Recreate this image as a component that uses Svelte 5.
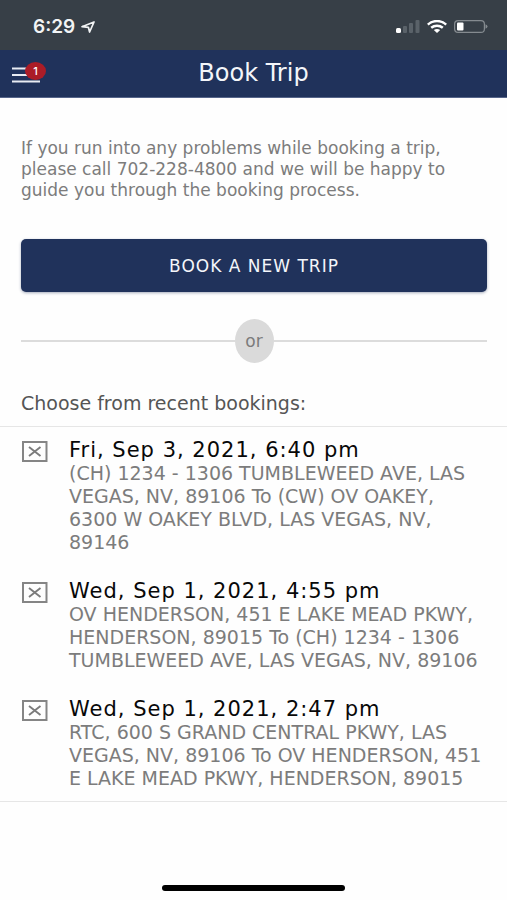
<script>
  const trips = [
    {
      when: 'Fri, Sep 3, 2021, 6:40 pm',
      route: '(CH) 1234 - 1306 TUMBLEWEED AVE, LAS VEGAS, NV, 89106 To (CW) OV OAKEY, 6300 W OAKEY BLVD, LAS VEGAS, NV, 89146'
    },
    {
      when: 'Wed, Sep 1, 2021, 4:55 pm',
      route: 'OV HENDERSON, 451 E LAKE MEAD PKWY, HENDERSON, 89015 To (CH) 1234 - 1306 TUMBLEWEED AVE, LAS VEGAS, NV, 89106'
    },
    {
      when: 'Wed, Sep 1, 2021, 2:47 pm',
      route: 'RTC, 600 S GRAND CENTRAL PKWY, LAS VEGAS, NV, 89106 To OV HENDERSON, 451 E LAKE MEAD PKWY, HENDERSON, 89015'
    }
  ];
</script>

<div class="screen">
  <div class="status">
    <div class="clock">
      <span>6:29</span>
      <svg width="14" height="12" viewBox="0 0 14 12" aria-hidden="true">
        <path d="M1 5.7 13 1 8.6 11 7.4 6.3Z" fill="none" stroke="#f2f4f5" stroke-width="1.7" stroke-linejoin="round" />
      </svg>
    </div>
    <div class="signals">
      <svg width="24" height="13" viewBox="0 0 24 13" aria-hidden="true">
        <rect x="0" y="8" width="5" height="5" rx="1.5" fill="#fff" />
        <rect x="7" y="6" width="4" height="7" rx="1" fill="#5a6269" />
        <rect x="13" y="3" width="4" height="10" rx="1" fill="#5a6269" />
        <rect x="19.5" y="0" width="4" height="13" rx="1" fill="#5a6269" />
      </svg>
      <svg width="20" height="13" viewBox="0 0 20 13" aria-hidden="true">
        <g fill="none" stroke="#fff" stroke-width="2.5">
          <path d="M.8 4.6C6-.1 14-.1 19.2 4.600" />
          <path d="M4.2 7.8c3.4-2.9 8.2-2.9 11.6 0" />
        </g>
        <path d="M6.8 10.1c2-1.5 4.4-1.5 6.4 0L10 13Z" fill="#fff" />
      </svg>
      <svg width="34" height="13" viewBox="0 0 34 13" aria-hidden="true">
        <rect x=".6" y=".6" width="29.8" height="11.8" rx="3.5" fill="none" stroke="#858b90" stroke-width="1.2" />
        <rect x="3" y="2.5" width="6.5" height="8" rx="1" fill="#fff" />
        <path d="M31.5 4.200q2 .7 2 2.300t-2 2.300Z" fill="#858b90" />
      </svg>
    </div>
  </div>

  <header>
    <button class="menu" aria-label="Menu, 1 notification">
      <svg width="28" height="16" viewBox="0 0 28 16" aria-hidden="true">
        <path d="M0 1.500h28M0 8h28M0 14.500h28" stroke="#e8ecf3" stroke-width="2" />
      </svg>
      <span class="badge">1</span>
    </button>
    <h1>Book Trip</h1>
  </header>

  <main>
    <section class="intro">
      <p>If you run into any problems while booking a trip, please call 702-228-4800 and we will be happy to guide you through the booking process.</p>
      <button class="primary">BOOK A NEW TRIP</button>
      <div class="divider"><span>or</span></div>
      <h2>Choose from recent bookings:</h2>
    </section>

    <ul>
      {#each trips as trip}
        <li>
          <button class="remove" aria-label="Remove booking {trip.when}">
            <svg width="26" height="21" viewBox="0 0 26 21" aria-hidden="true">
              <rect x="1" y="1" width="23.500" height="19" fill="none" stroke="#858585" stroke-width="2" />
              <path d="M7 6l11.500 9M18.500 6 7 15" stroke="#7b7b7b" stroke-width="1.900" />
            </svg>
          </button>
          <div class="trip">
            <h3>{trip.when}</h3>
            <p>{trip.route}</p>
          </div>
        </li>
      {/each}
    </ul>
  </main>

  <div class="home"></div>
</div>

<style>
  :global(body) {
    margin: 0;
    background: #fefefe;
  }

  .screen {
    box-sizing: border-box;
    min-height: 100vh;
    display: flex;
    flex-direction: column;
    font-family: 'DejaVu Sans', 'Open Sans', sans-serif;
    color: #7c7c7c;
  }

  h1, h2, h3, p, ul {
    margin: 0;
    padding: 0;
    font-weight: 400;
  }

  button {
    border: 0;
    padding: 0;
    background: none;
    font-family: inherit;
    cursor: pointer;
  }

  svg {
    display: block;
  }

  .status {
    display: flex;
    align-items: center;
    justify-content: space-between;
    box-sizing: border-box;
    height: 50px;
    padding: 3px 19px 0 33px;
    background: #373f47;
  }

  .clock {
    display: flex;
    align-items: center;
    gap: 6px;
    font: 600 19px/24px Inter, sans-serif;
    color: #f2f4f5;
  }

  .signals {
    display: flex;
    align-items: center;
    gap: 7px;
  }

  header {
    display: grid;
    grid-template-columns: 48px 1fr 48px;
    align-items: center;
    box-sizing: border-box;
    height: 48px;
    border-bottom: 1px solid #56658a;
    background: #20325b;
  }

  .menu {
    position: relative;
    margin-left: 12px;
    padding: 2px 0 0;
  }

  .badge {
    position: absolute;
    left: 13px;
    top: -3px;
    width: 21px;
    height: 18px;
    border-radius: 50%;
    background: #ab1c27;
    color: #fff;
    font: 500 11px/18px Inter, sans-serif;
    text-align: center;
  }

  h1 {
    font-size: 24px;
    line-height: 28px;
    padding-bottom: 2px;
    text-align: center;
    color: #f4f6fa;
  }

  .intro {
    display: flex;
    flex-direction: column;
    padding: 40px 20px 10px 21px;
  }

  .intro p {
    font-size: 17px;
    line-height: 21px;
  }

  .primary {
    height: 53px;
    margin-top: 38px;
    border-radius: 5px;
    background: #20325b;
    box-shadow: 0 1px 3px #20325b66;
    color: #f4f6fa;
    font-size: 17px;
    letter-spacing: 1px;
  }

  .divider {
    display: flex;
    align-items: center;
    margin-top: 27px;
  }

  .divider::before,
  .divider::after {
    content: '';
    flex: 1;
    height: 2px;
    background: #dcdcdc;
  }

  .divider span {
    width: 39px;
    border-radius: 50%;
    background: #dadada;
    font-size: 17px;
    line-height: 44px;
    text-align: center;
  }

  h2 {
    margin-top: 27px;
    font-size: 19px;
    line-height: 26px;
    color: #555;
  }

  ul {
    display: flex;
    flex-direction: column;
    gap: 25px;
    padding: 11px 20px 11px 22px;
    border: solid #e6e6e6;
    border-width: 1px 0;
    list-style: none;
  }

  li {
    display: flex;
    align-items: flex-start;
    gap: 21px;
  }

  .remove {
    margin-top: 3px;
  }

  .trip {
    flex: 1;
  }

  h3 {
    font-size: 21px;
    line-height: 24px;
    letter-spacing: 1px;
    color: #080808;
  }

  .trip p {
    font-size: 19px;
    line-height: 23px;
  }

  .home {
    width: 36%;
    height: 6px;
    margin: auto auto 9px;
    border-radius: 3px;
    background: #000;
  }
</style>
